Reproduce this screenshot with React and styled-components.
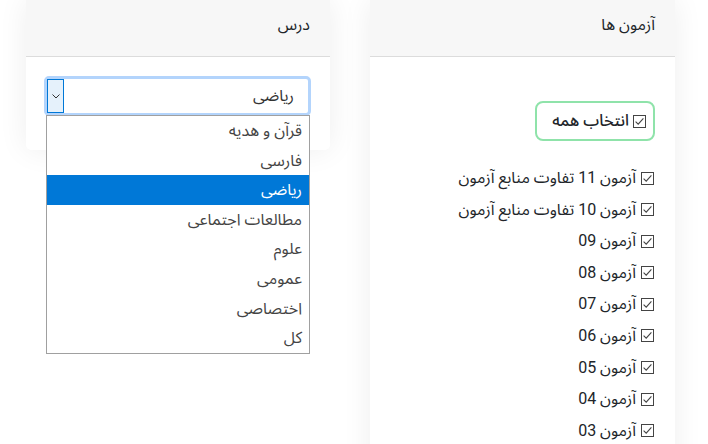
import React from "react";
import styled, { createGlobalStyle } from "styled-components";

const Global = createGlobalStyle`
  html, body { margin: 0; padding: 0; background: #fff; }
  body { font-family: Roboto, "Noto Sans Arabic", "Noto Naskh Arabic", "DejaVu Sans", sans-serif; color: #212529; }
  * { box-sizing: border-box; }
`;

const Page = styled.div`
  direction: rtl;
  display: grid;
  grid-template-columns: 305px 304px;
  column-gap: 40px;
  padding: 0 33px 0 26px;
  align-items: start;
  height: 444px;
  overflow: hidden;
`;

const Card = styled.div`
  background: #fff;
  border-radius: 0 0 5px 5px;
  box-shadow: 0 0 30px rgba(0, 0, 0, 0.07);
  height: ${(p) => p.$h || "auto"};
  position: relative;
`;

const CardHeader = styled.div`
  height: 57px;
  background: #f7f7f7;
  border-bottom: 1px solid #dcdcdc;
  padding: 14px 20px 0;
  font-size: 16px;
  line-height: 22px;
  color: #212529;
`;

const CardBody = styled.div`
  padding: ${(p) => p.$pad};
`;

const SelectAll = styled.div`
  display: inline-flex;
  align-items: center;
  gap: 4px;
  height: 40px;
  width: 120px;
  padding: 0 7px;
  border: 2px solid #8fe3aa;
  border-radius: 8px;
  font-size: 16px;
  font-weight: 500;
  color: #212529;
`;

const List = styled.div`
  display: flex;
  flex-direction: column;
  gap: 9.6px;
  margin-top: 26px;
  padding-right: 1px;
`;

const Item = styled.div`
  display: flex;
  align-items: center;
  gap: 5px;
  font-size: 16px;
  line-height: 22px;
  color: #212529;
`;

const Check = () => (
  <svg width="13" height="13" viewBox="0 0 13 13" style={{ flex: "none" }}>
    <rect x="0.5" y="0.5" width="12" height="12" fill="#fff" stroke="#444" strokeWidth="1" />
    <path d="M2.6 6.6 L5.2 9.2 L10.4 3.4" fill="none" stroke="#444" strokeWidth="1.1" />
  </svg>
);

const SelectWrap = styled.div`
  position: relative;
  width: 267px;
`;

const Select = styled.div`
  height: 40px;
  border: 3px solid #b3d4fc;
  border-radius: 5px;
  display: flex;
  align-items: stretch;
  background: #fff;
`;

const SelectValue = styled.div`
  flex: 1;
  padding-right: 14px;
  font-size: 16px;
  line-height: 34px;
  color: #333;
`;

const Arrow = styled.div`
  width: 17px;
  background: #e5f1fb;
  border: 1px solid #0078d7;
  display: flex;
  align-items: center;
  justify-content: center;
`;

const Options = styled.div`
  position: absolute;
  top: 39px;
  right: 1px;
  left: 2px;
  border: 1px solid #a0a0a0;
  background: #fff;
  z-index: 5;
`;

const Option = styled.div`
  height: 29.6px;
  line-height: 29.6px;
  padding-right: 7px;
  font-size: 16px;
  color: ${(p) => (p.$active ? "#fff" : "#444")};
  background: ${(p) => (p.$active ? "#0078d7" : "#fff")};
`;

const exams = [
  "آزمون 11 تفاوت منابع آزمون",
  "آزمون 10 تفاوت منابع آزمون",
  "آزمون 09",
  "آزمون 08",
  "آزمون 07",
  "آزمون 06",
  "آزمون 05",
  "آزمون 04",
  "آزمون 03",
];

const lessons = [
  "قرآن و هدیه",
  "فارسی",
  "ریاضی",
  "مطالعات اجتماعی",
  "علوم",
  "عمومی",
  "اختصاصی",
  "کل",
];

export default function App() {
  return (
    <>
      <Global />
      <Page>
        <Card $h="480px">
          <CardHeader>آزمون ها</CardHeader>
          <CardBody $pad="44px 20px 0">
            <SelectAll>
              <Check />
              <span>انتخاب همه</span>
            </SelectAll>
            <List>
              {exams.map((e) => (
                <Item key={e}>
                  <Check />
                  <span>{e}</span>
                </Item>
              ))}
            </List>
          </CardBody>
        </Card>
        <Card $h="150px">
          <CardHeader>درس</CardHeader>
          <CardBody $pad="19px 19px 0">
            <SelectWrap>
              <Select>
                <SelectValue>ریاضی</SelectValue>
                <Arrow>
                  <svg width="8" height="5" viewBox="0 0 8 5">
                    <path d="M0.5 0.5 L4 4 L7.5 0.5" fill="none" stroke="#333" strokeWidth="1" />
                  </svg>
                </Arrow>
              </Select>
              <Options>
                {lessons.map((l) => (
                  <Option key={l} $active={l === "ریاضی"}>
                    {l}
                  </Option>
                ))}
              </Options>
            </SelectWrap>
          </CardBody>
        </Card>
      </Page>
    </>
  );
}
